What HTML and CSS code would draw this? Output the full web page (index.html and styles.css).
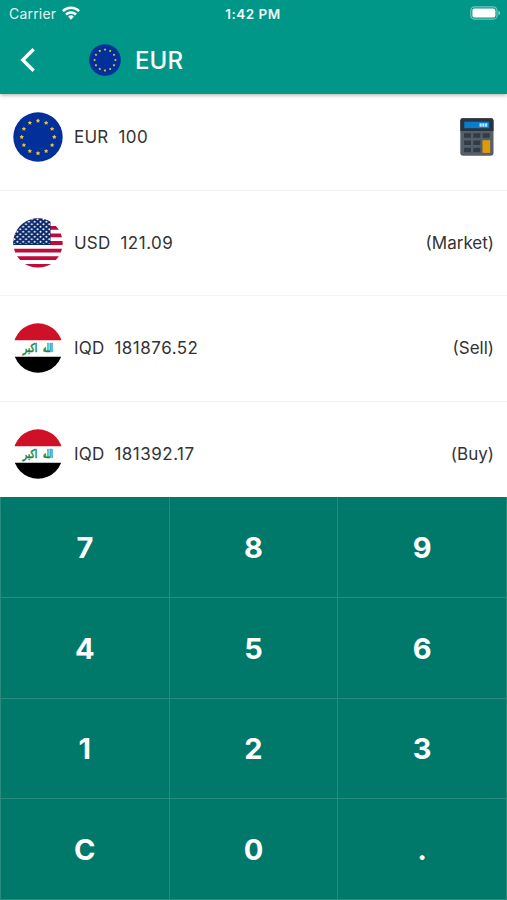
FILE: index.html
```html
<!DOCTYPE html>
<html lang="en">
<head>
<meta charset="utf-8">
<title>EUR</title>
<link rel="stylesheet" href="styles.css">
</head>
<body>
<svg class="defs" aria-hidden="true">
  <defs>
    <clipPath id="round"><circle cx="25" cy="25" r="24.7"/></clipPath>
    <symbol id="star" viewBox="-10 -10 20 20"><path d="M0-10 3-4 9.5-3.1 4.8 1.6 5.9 8.1 0 5-5.9 8.1-4.8 1.6-9.5-3.1-3-4z" fill="#e9c53a"/></symbol>
    <symbol id="eu" viewBox="0 0 50 50">
      <circle cx="25" cy="25" r="24.7" fill="#01309b"/>
      <g>
        <use href="#star" x="22.6" y="6.3" width="4.8" height="4.8"/>
        <use href="#star" x="30.75" y="8.5" width="4.8" height="4.8"/>
        <use href="#star" x="36.7" y="14.45" width="4.8" height="4.8"/>
        <use href="#star" x="38.9" y="22.6" width="4.8" height="4.8"/>
        <use href="#star" x="36.7" y="30.75" width="4.8" height="4.8"/>
        <use href="#star" x="30.75" y="36.7" width="4.8" height="4.8"/>
        <use href="#star" x="22.6" y="38.9" width="4.8" height="4.8"/>
        <use href="#star" x="14.45" y="36.7" width="4.8" height="4.8"/>
        <use href="#star" x="8.5" y="30.75" width="4.8" height="4.8"/>
        <use href="#star" x="6.3" y="22.6" width="4.8" height="4.8"/>
        <use href="#star" x="8.5" y="14.45" width="4.8" height="4.8"/>
        <use href="#star" x="14.45" y="8.5" width="4.8" height="4.8"/>
      </g>
    </symbol>
    <pattern id="dots" width="5.8" height="5" patternUnits="userSpaceOnUse">
      <circle cx="1.45" cy="1.25" r="1" fill="#fff"/><circle cx="4.35" cy="3.75" r="1" fill="#fff"/>
    </pattern>
    <symbol id="us" viewBox="0 0 50 50">
      <g clip-path="url(#round)">
        <path fill="#fff" d="M0 0h50v50H0z"/>
        <path d="M0 2.2h50M0 9.8h50M0 17.4h50M0 25h50M0 32.6h50M0 40.2h50M0 47.8h50" stroke="#c00a3a" stroke-width="3.8"/>
        <path fill="#0b2a6b" d="M0 0h37.5v26.9H0z"/>
        <path fill="url(#dots)" d="M0 0h37v26H0z"/>
      </g>
    </symbol>
    <symbol id="iq" viewBox="0 0 50 50">
      <g clip-path="url(#round)">
        <path fill="#fff" d="M0 0h50v50H0z"/>
        <path fill="#ce1126" d="M0 0h50v17.2H0z"/>
        <path fill="#000" d="M0 33.7h50V50H0z"/>
      </g>
      <g class="takbir">
        <text transform="translate(35 29.3) scale(.68 1.2)" text-anchor="middle">الله</text>
        <text transform="translate(17 29.3) scale(.9 1.2)" text-anchor="middle">اكبر</text>
      </g>
    </symbol>
  </defs>
</svg>

<header class="top">
  <div class="status">
    <div class="carrier"><span>Carrier</span>
      <svg class="wifi" viewBox="0 0 18 14"><g fill="none" stroke="#fff" stroke-width="2.5"><path d="M.9 5.1a11.6 11.6 0 0 1 16.2 0"/><path d="M4 8.5a7.1 7.1 0 0 1 10 0"/></g><path d="M6.1 10.6a4.2 4.2 0 0 1 5.8 0L9 13.7z" fill="#fff"/></svg>
    </div>
    <time class="clock">1:42 PM</time>
    <svg class="battery" viewBox="0 0 31 14"><rect x=".8" y=".8" width="26.2" height="12.4" rx="3.8" fill="none" stroke="#fff" stroke-opacity=".45" stroke-width="1.2"/><rect x="2.4" y="2.4" width="23" height="9.2" rx="2.2" fill="#fff"/><path d="M28.4 4.7c2.3.7 2.3 3.9 0 4.6z" fill="#fff" fill-opacity=".5"/></svg>
  </div>
  <div class="bar">
    <svg class="back" viewBox="0 0 16 24"><path d="M13.6 1.3 2.8 12l10.8 10.7" fill="none" stroke="#fff" stroke-width="3.4"/></svg>
    <svg class="flag-small"><use href="#eu"/></svg>
    <h1>EUR</h1>
  </div>
</header>

<main class="rates">
  <div class="rate"><svg class="flag"><use href="#eu"/></svg><span class="code">EUR</span><span class="amount">100</span>
    <svg class="calc" viewBox="0 0 34 38">
      <rect x=".3" y=".3" width="33.2" height="37.4" rx="2.4" fill="#545f69"/>
      <path d="M.3 13V2.7A2.4 2.4 0 0 1 2.7.3h28.4a2.4 2.4 0 0 1 2.4 2.4V13z" fill="#29343e"/>
      <path d="M4.3 3.7h24.9v6.5H4.3z" fill="#087dcc"/>
      <path d="M19.5 5.2h2.2v3.6h-2.2zm2.8 0h2.2v3.6h-2.2zm2.8 0h2.2v3.6h-2.2z" fill="#c4e7fa"/>
      <path d="M4 15.2h7v4.5H4zm9.3 0h7v4.5h-7zm9.4 0h7v4.5h-7zM4 22.4h7v4.5H4zm9.3 0h7v4.5h-7zM4 29.7h7v4.5H4zm9.3 0h7v4.5h-7z" fill="#303c46"/>
      <path d="M22.5 22.2h7.7v12.7h-7.7z" fill="#dc9b08"/>
    </svg>
  </div>
  <div class="rate"><svg class="flag"><use href="#us"/></svg><span class="code">USD</span><span class="amount">121.09</span><span class="kind">(Market)</span></div>
  <div class="rate"><svg class="flag"><use href="#iq"/></svg><span class="code">IQD</span><span class="amount">181876.52</span><span class="kind">(Sell)</span></div>
  <div class="rate"><svg class="flag"><use href="#iq"/></svg><span class="code">IQD</span><span class="amount">181392.17</span><span class="kind">(Buy)</span></div>
</main>

<section class="keypad">
  <button>7</button><button>8</button><button>9</button>
  <button>4</button><button>5</button><button>6</button>
  <button>1</button><button>2</button><button>3</button>
  <button>C</button><button>0</button><button>.</button>
</section>
</body>
</html>
```
FILE: styles.css
```css
* { box-sizing: border-box; }
body {
  margin: 0;
  height: 900px;
  display: flex;
  flex-direction: column;
  overflow: hidden;
  background: #fff;
  color: #333;
  font-family: Inter, sans-serif;
}
svg { display: block; flex: none; }
.defs { position: absolute; width: 0; height: 0; }

.top {
  position: relative;
  z-index: 1;
  flex: none;
  height: 94px;
  background: #009688;
  color: #fff;
  box-shadow: 0 1px 4px rgba(0, 0, 0, .35);
}
.status {
  height: 27px;
  display: grid;
  grid-template-columns: 1fr auto 1fr;
  align-items: center;
  padding: 0 6px 0 9px;
  font-size: 14px;
}
.carrier { display: flex; align-items: center; gap: 6px; letter-spacing: .2px; color: #e2f5f2; }
.wifi { width: 18px; height: 14px; margin-top: -1px; }
.clock { font-size: 13.5px; font-weight: 600; letter-spacing: .5px; margin-left: -4px; color: #effaf8; }
.battery { width: 31px; height: 14px; justify-self: end; margin-top: -1px; }
.bar { height: 65px; display: flex; align-items: center; padding-left: 20px; }
.back { width: 16px; height: 24px; }
.flag-small { width: 32px; height: 32px; margin-left: 53px; }
h1 { margin: 2px 0 0 14px; font-size: 24px; font-weight: 500; letter-spacing: .1px; }

.rates { flex: none; height: 412px; margin-top: -9px; }
.rate {
  height: 105.6px;
  display: flex;
  align-items: center;
  padding: 0 13px;
  border-bottom: 1px solid #f4f4f4;
  font-size: 17px;
}
.rate:last-child { border-bottom-color: transparent; }
.flag { width: 50px; height: 50px; }
.code { margin-left: 11px; letter-spacing: .2px; }
.amount { margin-left: 10px; letter-spacing: .5px; }
.kind, .calc { margin-left: auto; }
.calc { width: 34px; height: 38px; }
.takbir { fill: #168347; stroke: #168347; stroke-width: .5px; font: 10px "DejaVu Sans", sans-serif; }

.keypad {
  position: relative;
  flex: 1;
  display: grid;
  grid-template-columns: repeat(3, 1fr);
  grid-template-rows: repeat(4, 100.75px);
  background: #00796b;
  border-left: 1px solid #2a8a7e;
}
.keypad button {
  margin: 0;
  padding: 1px 0 0;
  border: 0 solid #2a8a7e;
  border-width: 0 1px 1px 0;
  background: none;
  color: #fff;
  font: 700 29px Inter, sans-serif;
}
```
